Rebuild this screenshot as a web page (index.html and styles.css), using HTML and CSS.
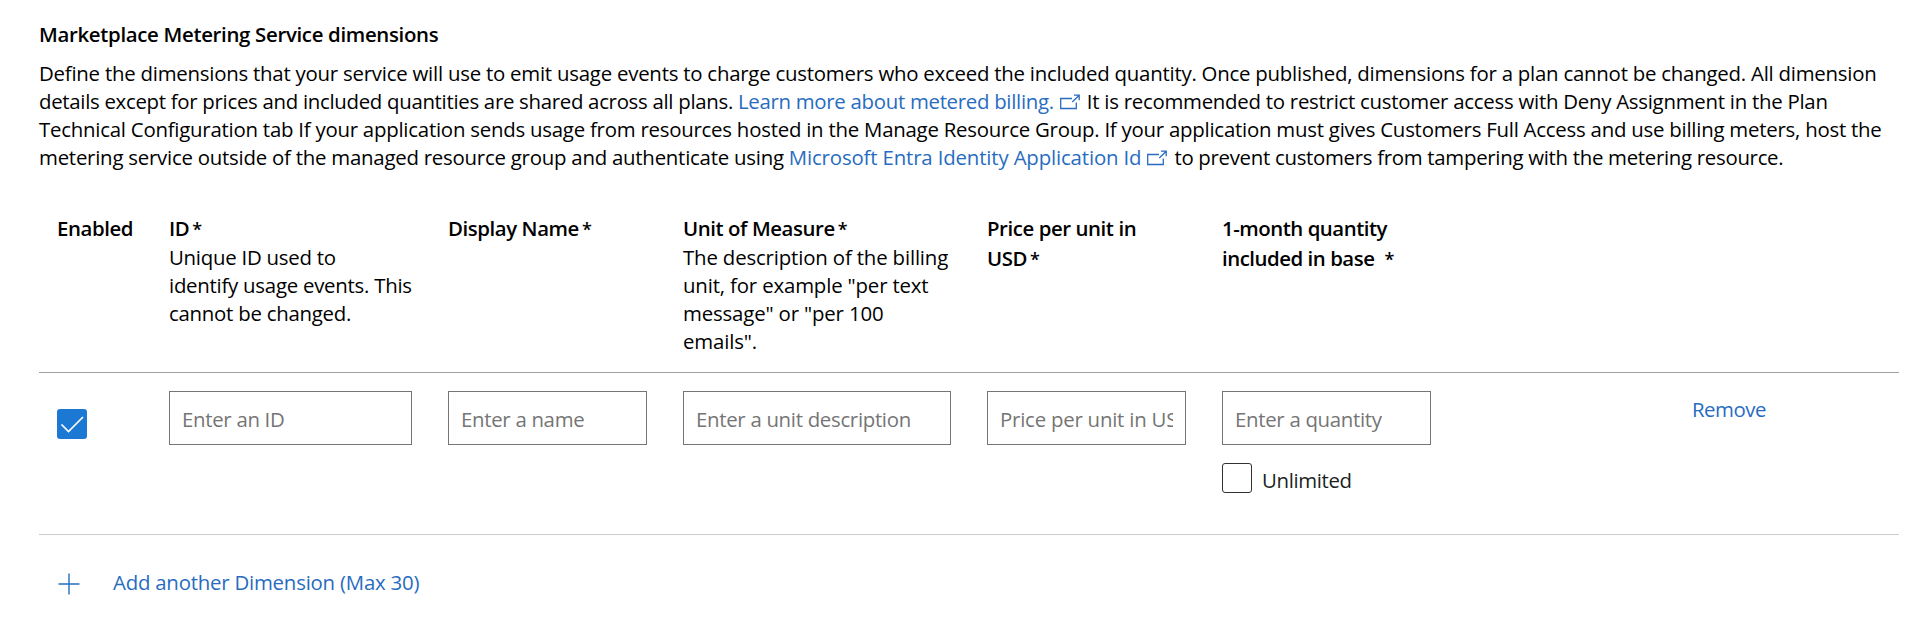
FILE: index.html
```html
<!DOCTYPE html>
<html lang="en">
<head>
<meta charset="utf-8">
<title>Marketplace Metering Service dimensions</title>
<link rel="stylesheet" href="styles.css">
</head>
<body>
<main class="page">
  <h1 class="title">Marketplace Metering Service dimensions</h1>
  <p class="intro">
    <span class="t1">Define the dimensions that your service will use to emit usage events to charge customers who exceed the included quantity. Once published, dimensions for a plan cannot be changed. All dimension</span><br>
    <span class="t2">details except for prices and included quantities are shared across all plans.</span> <a class="link t3">Learn more about metered billing.</a><svg class="ext" viewBox="0 0 20 16"><path d="M12 4.5H.7v10h15.6V8.5M12.3 8L19.2 1.2M14 1.2H19.2V6.2"/></svg><span class="t4">It is recommended to restrict customer access with Deny Assignment in the Plan</span><br>
    <span class="t5">Technical Configuration tab If your application sends usage from resources hosted in the Manage Resource Group. If your application must gives Customers Full Access and use billing meters, host the</span><br>
    <span class="t6">metering service outside of the managed resource group and authenticate using</span> <a class="link t7">Microsoft Entra Identity Application Id</a><svg class="ext" viewBox="0 0 20 16"><path d="M12 4.5H.7v10h15.6V8.5M12.3 8L19.2 1.2M14 1.2H19.2V6.2"/></svg><span class="t8">to prevent customers from tampering with the metering resource.</span>
  </p>

  <section class="table">
    <div class="row head">
      <div class="cell"><b class="label enabled">Enabled</b></div>
      <div class="cell"><b class="label">ID<i class="req">*</i></b><p class="desc id-desc">Unique ID used to<br>identify usage events. This<br>cannot be changed.</p></div>
      <div class="cell"><b class="label">Display Name<i class="req">*</i></b></div>
      <div class="cell"><b class="label">Unit of Measure<i class="req">*</i></b><p class="desc unit-desc">The description of the billing<br>unit, for example "per text<br>message" or "per 100<br>emails".</p></div>
      <div class="cell"><b class="label">Price per unit in<br>USD<i class="req">*</i></b></div>
      <div class="cell"><b class="label quantity">1-month quantity<br>included in base<i class="req far">*</i></b></div>
      <div class="cell"></div>
    </div>
    <div class="row body">
      <div class="cell"><span class="check on"><svg viewBox="0 0 30 30"><path d="M4.5 15.5L11.5 22.5L26 8"/></svg></span></div>
      <div class="cell"><input class="field" placeholder="Enter an ID"></div>
      <div class="cell"><input class="field" placeholder="Enter a name"></div>
      <div class="cell"><input class="field" placeholder="Enter a unit description"></div>
      <div class="cell"><input class="field price" placeholder="Price per unit in USD"></div>
      <div class="cell"><input class="field" placeholder="Enter a quantity"><label class="unlimited"><span class="check"></span><span class="unlimited-text">Unlimited</span></label></div>
      <div class="cell action"><a class="link remove">Remove</a></div>
    </div>
  </section>

  <a class="link add"><svg class="plus" viewBox="0 0 22 22"><path d="M11 .5v21M.5 11h21"/></svg><span class="add-text">Add another Dimension (Max 30)</span></a>
</main>
</body>
</html>
```
FILE: styles.css
```css
* { box-sizing: border-box; }
body {
  margin: 0;
  background: #fff;
  color: #000;
  font: 20.4px/28px "Open Sans", "Noto Sans", sans-serif;
  letter-spacing: -0.3px;
}
.page { padding: 20px 21px 0 39px; }
.title { margin: 0 0 11px; font-size: 20.4px; line-height: 28px; font-weight: 600; letter-spacing: -0.315px; }
.intro { margin: 0; white-space: nowrap; }
.t1 { letter-spacing: -0.231px; }
.t2 { letter-spacing: -0.296px; }
.t3 { letter-spacing: -0.294px; }
.t4 { letter-spacing: -0.259px; }
.t5 { letter-spacing: -0.235px; }
.t6 { letter-spacing: -0.235px; }
.t7 { letter-spacing: -0.152px; }
.t8 { letter-spacing: -0.295px; }
.link { color: #286cc0; text-decoration: none; }
.ext {
  width: 20px;
  height: 16px;
  margin: 0 7px 0 6px;
  vertical-align: -1px;
  fill: none;
  stroke: #286cc0;
  stroke-width: 1.3;
}

.table { margin-top: 43px; }
.row {
  display: grid;
  grid-template-columns: 112px 279px 235px 304px 235px 245px 1fr;
}
.cell { padding: 0 18px; }
.head { height: 159px; border-bottom: 1px solid #a0a0a0; white-space: nowrap; }
.label { display: block; margin-top: -1px; font-weight: 600; line-height: 30px; letter-spacing: -0.42px; }
.enabled { letter-spacing: -0.42px; }
.quantity { letter-spacing: -0.47px; }
.req { margin-left: 3px; font-style: normal; font-size: 18px; line-height: 1; }
.far { margin-left: 10px; }
.desc { margin: 0; }
.id-desc { letter-spacing: -0.25px; }
.unit-desc { letter-spacing: -0.16px; }

.body { height: 162px; padding-top: 18px; border-bottom: 1px solid #ccc; }
.field {
  display: block;
  width: 100%;
  height: 54px;
  padding: 1px 12px 0;
  border: 1px solid #757575;
  border-radius: 0;
  background: #fff;
  font: inherit;
  letter-spacing: -0.3px;
}
.price { letter-spacing: -0.22px; }
.field::placeholder { color: #757575; opacity: 1; }
.check {
  display: block;
  flex: none;
  width: 30px;
  height: 30px;
  border: 1px solid #323130;
  border-radius: 3px;
}
.check.on { margin-top: 18px; border: 0; background: #1b79d3; }
.check svg { display: block; fill: none; stroke: #fff; stroke-width: 1.7; }
.unlimited {
  display: flex;
  align-items: center;
  gap: 10px;
  margin-top: 18px;
  color: #201f1e;
  letter-spacing: -0.36px;
}
.unlimited-text { padding-top: 2px; margin-bottom: -1px; }
.action { padding: 4px 0 0 243px; }
.remove { letter-spacing: -0.47px; }
.add { display: flex; align-items: center; gap: 33px; margin: 34px 0 0 19px; letter-spacing: -0.22px; }
.add-text { padding-bottom: 2px; margin-top: -1px; }
.plus { width: 22px; height: 22px; fill: none; stroke: #286cc0; stroke-width: 1.4; }
```
